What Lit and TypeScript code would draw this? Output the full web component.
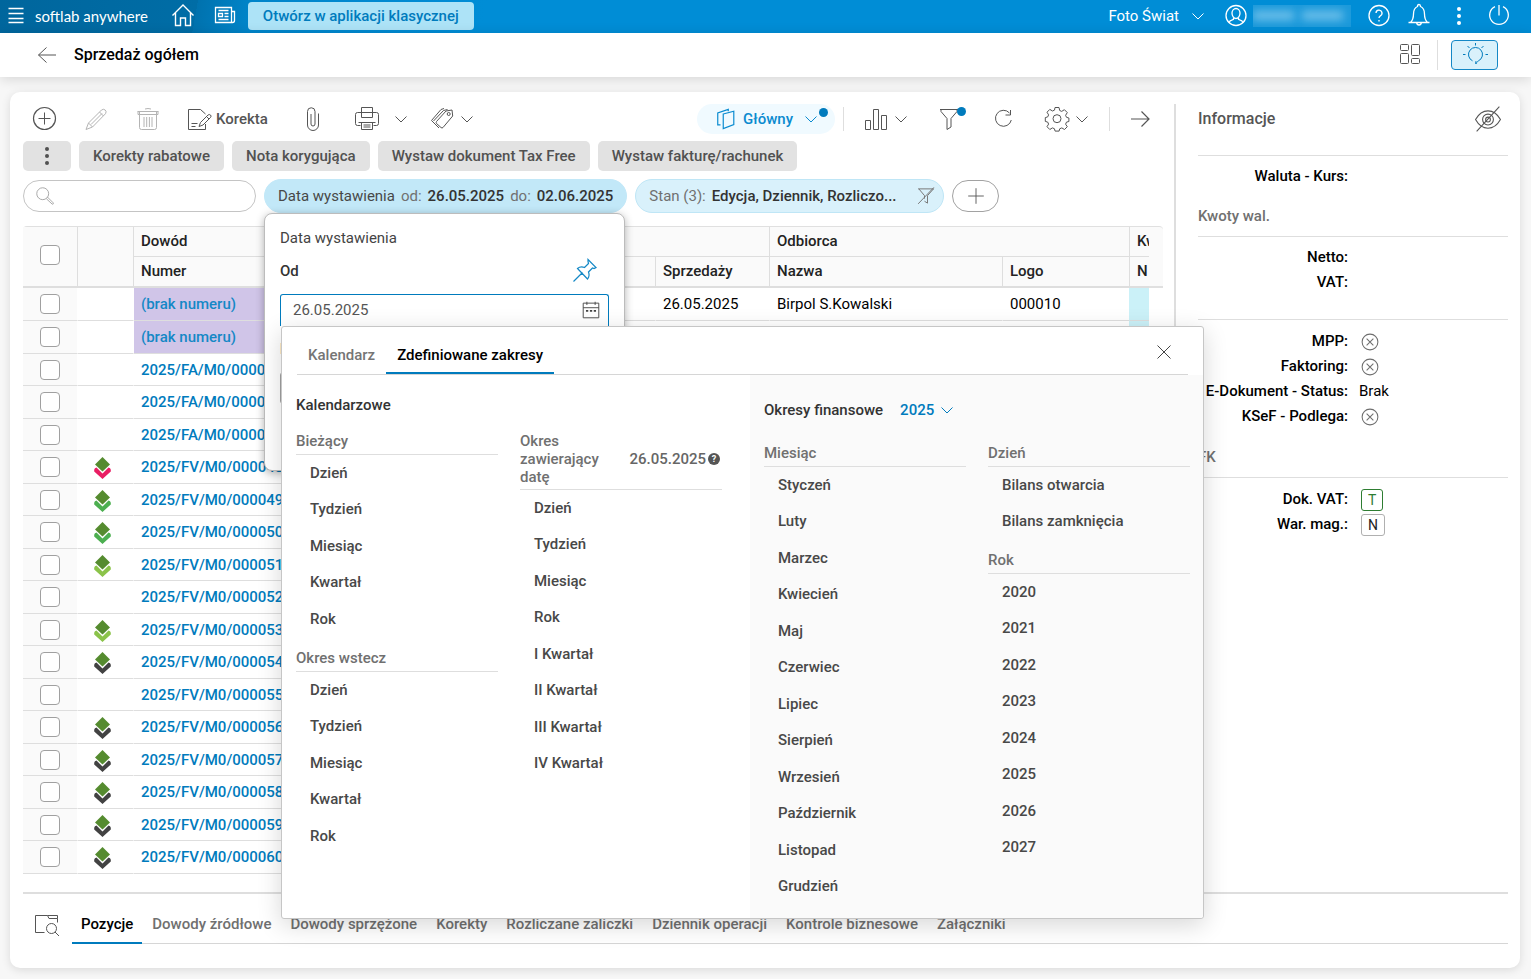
import { LitElement, html, svg, css, nothing } from "lit";
import { customElement, property, state } from "lit/decorators.js";
import { classMap } from "lit/directives/class-map.js";

const ICONS: Record<string, any> = {
  menu: svg`<path d="M4.500 4.500h15M4.500 9.500h15M4.500 14.500h15M4.500 18.500h15" stroke-width="1.500"/>`,
  home: svg`<path d="M1.500 11.500 12 1l10.500 10.500M4.500 9v12.500h5v-7.500h5v7.500h5V9" stroke-width="1.400"/>`,
  news: svg`<path d="M2.500 3.500h16v15h-16zM18.500 7.500h3v9q0 2-2 2h-2M5.500 6.500h10M5.500 9.500h4v3h-4zM11.500 9.500h4M11.500 12.500h4M5.500 15.500h10" stroke-width="1.300"/>`,
  chevron: svg`<path d="m6.500 9.500 5.500 5.500 5.500-5.500"/>`,
  user: svg`<circle cx="12" cy="11.500" r="10" stroke-width="1.300"/><path d="M9.500 14v1.300L6 17l-1 2M14.500 14v1.300l3.500 1.700 1 2M8 9a4 4.500 0 0 1 8 0c0 3-1.800 5.500-4 5.500s-4-2.500-4-5.500z" stroke-width="1.300"/>`,
  help: svg`<circle cx="12" cy="11.500" r="10" stroke-width="1.300"/><path d="M9 9a3 3 0 1 1 4.300 2.800c-1 .5-1.300 1-1.300 2.300M12 16v1.500" stroke-width="1.300"/>`,
  bell: svg`<path d="M1.500 18.500h21M3.500 18.500c2-2 3-4 3-8.500 0-4 1.500-6.500 4-7.500q0-2 1.500-2t1.500 2c2.500 1 4 3.500 4 7.500 0 4.500 1 6.500 3 8.500M9.500 18.500q.5 2.500 2.500 2.500t2.500-2.500" stroke-width="1.300"/>`,
  power: svg`<path d="M12 1v10.500M8 2.700a9.300 9.300 0 1 0 8 0" stroke-width="1.300"/>`,
  back: svg`<path d="M21 12H3.500M11.500 4.500 3.500 12l8 7.500"/>`,
  forward: svg`<path d="M3 12h18M13.500 4.500l7.500 7.500-7.500 7.500" stroke-width="1.200"/>`,
  layout: svg`<rect x="2.500" y="1.500" width="8" height="6" rx="1"/><rect x="13.500" y="1.500" width="8" height="11" rx="1"/><rect x="2.500" y="10.500" width="8" height="10" rx="1"/><rect x="13.500" y="15.500" width="8" height="5" rx="1"/>`,
  bulb: svg`<path d="M9.500 17.800a7 7 0 1 1 6 0c-1.500 1-2.200 2-2.500 3.200-.6-1.300-.6-2 .3-3M12.500 0v2.500M4.500 3l2 2M20.500 3l-2 2M0 11.500h2.500M22.500 11.500H25"/>`,
  plusCircle: svg`<circle cx="12.500" cy="11.500" r="11" stroke-width="1.200"/><path d="M12.500 5.500v12M6.500 11.500h12"/>`,
  pencil: svg`<path d="M2 22.500 4.500 16 17.500 3q2-1.500 3.700 0t.3 3.700L8.500 20zM4.500 16l4 4M15.500 5l4 4M7 17.500 18 6.500"/>`,
  trash: svg`<path d="M1.500 4.500h21M9 2q3-1 6 0M3.500 4.500v16q0 2 2 2h13q2 0 2-2v-16M2 4.500v3h20v-3M8 10v10M10.700 10v10M13.400 10v10M16 10v10"/>`,
  correction: svg`<path d="M17.500 17v5.500h-17v-20h12l5 4.500M3.500 16.500h6M3.500 19.500h4M11 19.500l1.500-4 7.500-7.500q1.300-1 2.500 0t0 2.500l-7.500 7.500zM18.500 9.500l2.500 2.500"/>`,
  clip: svg`<path d="M17.500 6.500V18a5.500 5.500 0 0 1-11 0V4.500a3.500 3.500 0 0 1 7.500 0V17a2 2 0 0 1-4 0V7"/>`,
  printer: svg`<path d="M6.500 5.500v-5h11v5M5.500 18.500h-3q-2 0-2-2v-9q0-2 2-2h19q2 0 2 2v9q0 2-2 2h-3M6.500 5.500v5h11v-5M6.500 15.500h11v7h-11zM3.500 15.500h17M8.500 18h7M8.500 20h7"/>`,
  tag: svg`<path d="m6.500 14.500 9.500-10.500 6-1 .7 6L13 20.500q-1 1-2 0l-4.500-4q-.7-.8 0-2zM3.500 14 13.500 3.500l4-1M1.500 13.500l9.500-11 3-1M1.500 13.500l7.500 7.500"/><circle cx="18.700" cy="7" r="1.500"/>`,
  book: svg`<path d="M9 6.500 20.500 3.500v14.500L9 22.500zM6 18.500H3V5.500L14.500 1.500v2" stroke-width="1.300"/>`,
  bars: svg`<path d="M1.500 13.500h5v9h-5zM9.500 2.500h5v20h-5zM17.500 8.500h5v14h-5z"/>`,
  funnel: svg`<path d="M3 2.500h18M4 2.500v2l6 7v11l4-2.500v-8.500l6-7v-2"/>`,
  refresh: svg`<path d="M18.500 6A8 8 0 1 0 20.300 13M19.500 3v5h-5"/>`,
  gear: svg`<path d="M10 .5h4l.7 3 2 .9 2.700-1.700 2.900 2.900-1.700 2.700.9 2 2.400.7v3.500l-2.400.6-.9 2.100 1.700 2.500-2.800 2.800-2.700-1.600-2.100.9-.6 2.300h-4l-.7-2.400-2-.8-2.600 1.600-2.800-2.800 1.600-2.600-.9-2-2.400-.7v-3.800l2.400-.7.9-2-1.600-2.700 2.800-2.800 2.700 1.600 2-.9z" stroke-linejoin="round"/><circle cx="12" cy="11.700" r="4"/>`,
  search: svg`<circle cx="9.500" cy="9.500" r="6.500"/><path d="m14.500 13 6.500 6.500q.500 1.500-1 1.500L13.500 15"/>`,
  clearFunnel: svg`<path d="M1.500 2.500h21M2.500 2.500 10 11.500v4M22 2.500 14 11.500v10l-4-2.500M22.500.500 1.500 22.500" stroke-width="1.300"/>`,
  plus: svg`<path d="M12 3.500v17M3.500 12h17"/>`,
  pin: svg`<path d="M.5 22.500 9.500 13.500M15 .5l8 8-2 1-1.500-.5-4 4q1.500 4-1 7L4.500 9.500q3-2.500 7-1l4-4-.5-2z" stroke-width="1.200"/>`,
  calendar: svg`<path d="M3.500 4.500h17v16h-17zM3.500 9.500h17M7.500 3v3.500M16.500 3v3.500"/><path d="M6.500 13h2.500M10.800 13h2.500M15 13h2.500" stroke-width="2"/>`,
  close: svg`<path d="m5.500 5.500 13 13M18.500 5.500l-13 13"/>`,
  eyeOff: svg`<path d="M.5 12.500Q5 4.500 12 4.500t11.500 8Q19 20.500 12 20.500T.5 12.500zM1.500 23.500 22.500.5"/><circle cx="12" cy="12.500" r="5"/><circle cx="12" cy="12.500" r="2.200"/>`,
  cross: svg`<circle cx="12" cy="12" r="10.500" stroke-width="1.400"/><path d="m7.500 7.500 9 9M16.500 7.500l-9 9" stroke-width="1.400"/>`,
  preview: svg`<path d="M9.500 19.500h-9v-17h12l1.500 3h8.500v4M12.500 2.500h10v3"/><circle cx="16.500" cy="15.500" r="5"/><path d="m20 19 4 4"/>`,
};

@customElement("ui-icon")
class UiIcon extends LitElement {
  @property() name = "";
  static styles = css`
    :host { display: inline-block; flex: none; width: 24px; height: 24px; }
    svg { display: block; width: 100%; height: 100%; fill: none; stroke: currentColor; overflow: visible; }
  `;
  render() {
    return html`<svg viewBox="0 0 24 24" aria-hidden="true">${ICONS[this.name]}</svg>`;
  }
}

const base = css`
  * { box-sizing: border-box; }
  button { border: 0; background: none; padding: 0; margin: 0; color: inherit; font: inherit; display: flex; align-items: center; cursor: pointer; white-space: nowrap; }
  h1, h2, h3, h4, ul, dl, dd { margin: 0; padding: 0; }
  h1, h2, h3, h4 { font-weight: 500; }
  ul { list-style: none; }
  a { color: inherit; text-decoration: none; }
  .chev { width: 24px; height: 24px; margin: 0 -6px; }
`;

@customElement("range-picker")
class RangePicker extends LitElement {
  static styles = [base, css`
    :host { display: block; background: #fff; border: 1px solid #c6c6c6; border-radius: 3px; box-shadow: 0 6px 24px rgba(0, 0, 0, .16); color: #484848; font-weight: 500; }
    .head { display: flex; align-items: flex-end; justify-content: space-between; height: 48px; margin: 0 15px; border-bottom: 1px solid #d6d6d6; }
    .tabs { display: flex; height: 48px; }
    .tab { padding: 11px 11px 0; color: #757575; border-bottom: 2px solid transparent; }
    .tab.on { color: #000; border-color: #007bbd; }
    .close { width: 24px; height: 24px; margin: 0 12px 10px; color: #444; align-self: flex-end; }
    .panes { display: grid; grid-template-columns: 468px 1fr; }
    .pane { padding: 20px 14px 22px; }
    .pane.fin { background: #fafafa; border-radius: 0 0 3px 0; padding-top: 23px; padding-right: 12px; }
    .title { display: flex; align-items: center; gap: 17px; line-height: 20px; font-size: 15px; color: #333; }
    .cols { display: grid; grid-template-columns: 202px 202px; gap: 22px; margin-top: 17px; }
    .fin .cols { margin-top: 22px; }
    .sub { display: flex; align-items: center; justify-content: space-between; font-size: 15px; line-height: 18px; padding-bottom: 4px; border-bottom: 1px solid #dedede; color: #707070; }
    .sub.tall { padding-bottom: 3px; }
    .sub span { width: 90px; }
    .sub time { display: flex; align-items: center; gap: 2px; padding-right: 2px; color: #666; }
    .hint { width: 12px; height: 12px; border-radius: 50%; background: #555; color: #fff; font-size: 9px; line-height: 12px; text-align: center; font-weight: 700; font-style: normal; }
    .list { padding: 8px 0 0 14px; }
    .list li { line-height: 20px; margin-bottom: 16px; }
    .list li:nth-child(even) { margin-bottom: 17px; }
    .list li:last-child { margin-bottom: 0; }
    .group + .group { margin-top: 20px; }
    .year { display: flex; align-items: center; color: #007bbd; }
    select { appearance: none; border: 0; background: none; padding: 0; color: inherit; font: inherit; width: 41px; }
  `];
  private group(title: any, items: string[], tall = false) {
    return html`<div class="group">
      <h4 class=${classMap({ sub: true, tall })}>${title}</h4>
      <ul class="list">${items.map((i) => html`<li><button>${i}</button></li>`)}</ul>
    </div>`;
  }
  render() {
    const span = ["Dzień", "Tydzień", "Miesiąc", "Kwartał", "Rok"];
    return html`
      <div class="head">
        <div class="tabs" role="tablist">
          <button class="tab" role="tab" aria-selected="false">Kalendarz</button>
          <button class="tab on" role="tab" aria-selected="true">Zdefiniowane zakresy</button>
        </div>
        <button class="close" aria-label="Zamknij"><ui-icon name="close"></ui-icon></button>
      </div>
      <div class="panes">
        <section class="pane">
          <h3 class="title">Kalendarzowe</h3>
          <div class="cols">
            <div>${this.group("Bieżący", span)}${this.group("Okres wstecz", span)}</div>
            <div>${this.group(html`<span>Okres zawierający datę</span><time>26.05.2025<i class="hint">?</i></time>`,
              ["Dzień", "Tydzień", "Miesiąc", "Rok", "I Kwartał", "II Kwartał", "III Kwartał", "IV Kwartał"], true)}</div>
          </div>
        </section>
        <section class="pane fin">
          <div class="title"><label for="year">Okresy finansowe</label>
            <span class="year"><select id="year"><option>2025</option></select><ui-icon class="chev" name="chevron"></ui-icon></span>
          </div>
          <div class="cols">
            <div>${this.group("Miesiąc", ["Styczeń", "Luty", "Marzec", "Kwiecień", "Maj", "Czerwiec", "Lipiec", "Sierpień", "Wrzesień", "Październik", "Listopad", "Grudzień"])}</div>
            <div>${this.group("Dzień", ["Bilans otwarcia", "Bilans zamknięcia"])}${this.group("Rok", ["2020", "2021", "2022", "2023", "2024", "2025", "2026", "2027"])}</div>
          </div>
        </section>
      </div>`;
  }
}

@customElement("info-panel")
class InfoPanel extends LitElement {
  static styles = [base, css`
    :host { display: block; color: #000; }
    .head { display: flex; justify-content: space-between; align-items: center; height: 51px; padding: 0 7px 22px 0; font-size: 16px; color: #555; }
    .head h2 { font-size: 16px; }
    .head ui-icon { width: 26px; height: 26px; }
    .block { border-top: 1px solid #dedede; padding-top: 8px; }
    .block.low { padding: 9px 0 1px; }
    .row { display: grid; grid-template-columns: 150px 1fr; column-gap: 11px; height: 25px; line-height: 25px; align-items: center; }
    dt { text-align: right; font-weight: 500; white-space: nowrap; justify-self: end; }
    dd { display: flex; align-items: center; }
    dd ui-icon { width: 18px; height: 18px; margin-left: 2px; color: #6e6e6e; }
    h3 { font-size: 15px; line-height: 20px; padding: 17px 0 10px; color: #707070; }
    .gap { height: 24px; }
    .flag { height: 22px; line-height: 20px; min-width: 22px; margin-left: 2px; text-align: center; border: 1px solid #b0b0b0; border-radius: 3px; font-size: 14px; color: #222; padding: 0 6px; }
    .flag.yes { border-color: #2e7d32; color: #2e7d32; }
  `];
  render() {
    const row = (k: string, v: any = nothing) => html`<div class="row"><dt>${k}</dt><dd>${v}</dd></div>`;
    const no = html`<ui-icon name="cross"></ui-icon>`;
    return html`
      <div class="head"><h2>Informacje</h2><button aria-label="Ukryj panel"><ui-icon name="eyeOff"></ui-icon></button></div>
      <dl class="block">${row("Waluta - Kurs:")}</dl>
      <h3>Kwoty wal.</h3>
      <dl class="block">${row("Netto:")}${row("VAT:")}</dl>
      <div class="gap"></div>
      <dl class="block low">${row("MPP:", no)}${row("Faktoring:", no)}${row("E-Dokument - Status:", "Brak")}${row("KSeF - Podlega:", no)}</dl>
      <h3>FK</h3>
      <dl class="block low">${row("Dok. VAT:", html`<span class="flag yes">T</span>`)}${row("War. mag.:", html`<span class="flag">N</span>`)}</dl>`;
  }
}

type Doc = { no: string; mark?: string; draft?: boolean; date?: string; name?: string; logo?: string };
const MARKS: Record<string, string> = { "48": "pink", "49": "green", "50": "green", "51": "lime", "53": "lime", "54": "dark", "56": "dark", "57": "dark", "58": "dark", "59": "dark", "60": "dark" };
const DOCS: Doc[] = [
  { no: "(brak numeru)", draft: true, date: "26.05.2025", name: "Birpol S.Kowalski", logo: "000010" },
  { no: "(brak numeru)", draft: true },
  ...["07", "08", "09"].map((n) => ({ no: `2025/FA/M0/0000${n}` })),
  ...Array.from({ length: 13 }, (_, i) => String(48 + i)).map((n) => ({ no: `2025/FV/M0/0000${n}`, mark: MARKS[n] })),
];

@customElement("app-root")
class AppRoot extends LitElement {
  @state() private docs = DOCS;
  static styles = [base, css`
    :host { display: flex; flex-direction: column; min-height: 100vh; font: 400 15px/20px Roboto, "Liberation Sans", sans-serif; color: #555; background: #f7f7f7; box-sizing: border-box; }
    .top { display: flex; align-items: center; height: 33px; padding: 0 20px 2px 4px; color: #fff; background: linear-gradient(100deg, #00669d 0, #006da6 195px, #0072ae 195px, #0085ca 250px, #008dd6 480px); }
    .brand { font: 400 15px/20px Lato, Roboto, sans-serif; margin-left: 7px; }
    .top .classic { height: 28px; padding: 0 15px; margin-left: 11px; border-radius: 4px; background: #ade3f7; color: #007bbd; font-weight: 500; }
    .top .home { margin: 0 18px 0 23px; }
    .top a, .top button { display: flex; }
    .acct { display: flex; align-items: center; margin-left: auto; gap: 16px; }
    .firm { gap: 13px; margin-right: 4px; }
    .me { gap: 5px; }
    .name { width: 98px; height: 22px; background: #1c9adb; overflow: hidden; display: flex; align-items: center; }
    .name i { flex: 1; height: 9px; margin: 0 8px 0 0; background: #6fc0ea; filter: blur(4px); }
    .dots { display: flex; flex-direction: column; align-items: center; gap: 3px; width: 24px; }
    .dots i { width: 4px; height: 4px; border-radius: 50%; background: currentColor; }
    .sub { display: flex; align-items: center; height: 44px; padding: 0 33px 0 35px; background: #fff; box-shadow: 0 2px 12px rgba(0, 0, 0, .14); }
    .sub h1 { font-size: 16px; line-height: 20px; color: #000; margin-left: 15px; }
    .sub .right { display: flex; align-items: center; margin-left: auto; }
    .vr { width: 1px; height: 30px; background: #dedede; }
    .right .vr { margin: 0 13px 0 15px; }
    .tips { width: 47px; height: 30px; justify-content: center; border: 1px solid #1488c6; border-radius: 4px; background: #d9f1fb; color: #007bbd; }
    .card { flex: 1; display: flex; flex-direction: column; margin: 15px 11px 11px 10px; padding: 0 12px 24px 13px; border-radius: 10px; background: #fff; box-shadow: 0 2px 10px rgba(0, 0, 0, .12); }
    .main { flex: 1; display: grid; grid-template-columns: minmax(0, 1fr) 334px; padding-top: 12px; }
    .left { padding-right: 11px; display: flex; flex-direction: column; }
    info-panel { border-left: 2px solid #dedede; padding-left: 22px; }
    .bar { display: flex; align-items: center; height: 29px; padding: 0 11px 0 9px; }
    .bar .g { display: flex; align-items: center; }
    .g.a { gap: 28px; }
    .g.b { gap: 30px; margin-left: 33px; }
    .g.c { gap: 23px; }
    .g.d { gap: 30px; margin: 0 21px 0 20px; }
    .g.r { margin-left: auto; }
    .split { display: flex; align-items: center; gap: 7px; }
    .split.wide { gap: 16px; }
    .off { color: #b4b4b4; }
    .label { gap: 4px; font-weight: 500; }
    .view { position: relative; height: 30px; gap: 6px; padding: 0 18px 0 18px; margin-right: 8px; border-radius: 15px; background: #f0faff; color: #0a8bd0; font-weight: 500; }
    .view ui-icon:first-child { width: 22px; height: 22px; }
    .view .chev { margin-left: 0; }
    .dot { position: absolute; top: 4px; right: 7px; width: 9px; height: 9px; border-radius: 50%; background: #007bbd; }
    .has { position: relative; }
    .has .dot { top: 0; right: -5px; }
    .bar .vr { height: 24px; }
    .bar .vr.end { margin-right: 18px; }
    .chips { display: flex; gap: 8px; margin: 8px 0; }
    .chip { height: 30px; padding: 0 14px; border-radius: 5px; background: #e2e2e2; color: #515151; font-weight: 500; }
    .chip.more { width: 48px; justify-content: center; }
    .more .dots { width: 4px; }
    .filters { display: flex; gap: 8px; align-items: center; height: 34px; }
    .search { display: flex; align-items: center; width: 233px; height: 32px; padding: 0 10px; border: 1px solid #c4c4c4; border-radius: 16px; color: #a2a2a2; }
    .search ui-icon { width: 22px; height: 22px; }
    .search input { flex: 1; min-width: 0; border: 0; outline: 0; background: none; font: inherit; }
    .anchor { position: relative; }
    .pill { height: 34px; padding: 0 13px; gap: 6px; border: 1px solid #bfe6f6; border-radius: 17px; background: #d9f1fb; color: #707070; }
    .pill b { font-weight: 500; color: #333; }
    .pill.on { background: #c2e8f8; border-color: #c2e8f8; }
    .pill.on span { color: #484848; }
    .pill ui-icon { width: 18px; height: 18px; margin: 0 -5px 0 15px; color: #777; }
    .add { width: 47px; height: 32px; justify-content: center; border: 1px solid #a2a2a2; border-radius: 16px; }
    .add ui-icon { width: 22px; height: 22px; }
    .pop { position: absolute; z-index: 5; top: 34px; left: 0; width: 361px; height: 258px; padding: 14px 15px; border: 1px solid #bcbcbc; border-radius: 8px; background: #fff; box-shadow: 0 2px 8px rgba(0, 0, 0, .3); color: #444; }
    .pop h2 { font-size: 15px; font-weight: 400; line-height: 20px; }
    .pop .lab { display: flex; align-items: center; justify-content: space-between; padding: 10px 12px 10px 0; line-height: 26px; font-weight: 500; color: #333; }
    .pop .lab ui-icon { color: #1488c6; }
    .date { position: relative; }
    .box { display: flex; align-items: center; width: 329px; height: 32px; padding: 0 6px 0 12px; border: 1px solid #a2a2a2; border-radius: 3px; }
    .box.on { border-color: #007bbd; border-bottom: 0; border-radius: 3px 3px 0 0; padding-bottom: 2px; }
    .box input { flex: 1; min-width: 0; border: 0; outline: 0; padding: 0; font: inherit; color: #555; background: none; }
    .box ui-icon { width: 22px; height: 22px; }
    range-picker { position: absolute; z-index: 6; top: 32px; left: 1px; width: 923px; }
    .grid { margin-top: 13px; padding-right: 14px; border-radius: 4px 4px 0 0; background: linear-gradient(#fafafa 0 59px, #e0e0e0 59px 61px, #fff 61px); border-top: 1px solid #e0e0e0; padding-bottom: 17px; }
    table { width: 100%; table-layout: fixed; border-collapse: separate; border-spacing: 0; }
    th, td { padding: 0 0 0 7px; text-align: left; white-space: nowrap; overflow: hidden; border-bottom: 1px solid #dedede; }
    th { height: 30px; background: #fafafa; color: #222; font-weight: 500; border-left: 1px solid #dedede; }
    th:first-child { border-left: 0; }
    .h1 th { padding-bottom: 2px; }
    .h2 th { height: 31px; padding-bottom: 1px; border-bottom-width: 2px; border-left: 1px solid #dedede; }
    .h1 .two { border-bottom-width: 2px; }
    .sel, th.sel { padding: 0; text-align: center; background: #fafafa; }
    .h1 th.sel { padding-bottom: 3px; }
    td { height: 32px; color: #000; border-left: 1px solid transparent; background-clip: padding-box; }
    tbody tr:first-child td, tbody tr:nth-child(even) td { height: 33px; }
    td.sel { border-left: 0; }
    .cy { background: #cbf1f8; border-left-color: #cbf1f8; }
    .draft { background-color: #d0c5e8; }
    .draft a { color: #1488c6; }
    td a { color: #007bbd; font-weight: 500; }
    input[type="checkbox"] { appearance: none; display: block; width: 20px; height: 20px; margin: 0 auto; border: 1px solid #a0a0a0; border-radius: 4px; background: #fff; }
    .ico { padding: 0 0 0 16px; }
    .mark { display: block; width: 17px; height: 22px; margin-top: 2px; }
    .mark .gem { fill: #558b2f; }
    .pink { fill: #e91e63; } .green { fill: #4caf50; } .lime { fill: #8bc34a; } .dark { fill: #424242; }
    .foot { display: flex; align-items: center; padding-left: 12px; gap: 13px; height: 52px; border-top: 2px solid #dedede; box-sizing: border-box; }
    .foot > ui-icon { margin-top: 12px; }
    .ftabs { flex: 1; display: flex; gap: 1px; height: 38px; margin-top: 12px; border-bottom: 1px solid #d6d6d6; color: #707070; font-weight: 500; }
    .ftabs button { height: 38px; padding: 0 9px; border-bottom: 2px solid transparent; }
    .ftabs .on { color: #000; border-color: #007bbd; }
  `];
  private chev = html`<ui-icon class="chev" name="chevron"></ui-icon>`;
  private btn(icon: string, label: string, cls = "") {
    return html`<button class=${cls} aria-label=${label}><ui-icon name=${icon}></ui-icon></button>`;
  }
  private split(icon: string, label: string, wide = false) {
    return html`<span class=${classMap({ split: true, wide })}>${this.btn(icon, label)}<button aria-label="${label}: więcej">${this.chev}</button></span>`;
  }
  private mark(kind?: string) {
    return kind ? html`<svg class="mark" viewBox="0 0 17 22"><path class="gem" d="M8.500 0 16 7.500 8.500 14.500 1 7.500z"/><path class=${kind} d="M2.500 10.500 8.500 16.500l6-6q2 .3 2.300 2.200V14.500L8.500 22 .2 14.500v-1.800q.3-1.900 2.300-2.200z"/></svg>` : nothing;
  }
  render() {
    return html`
      <header class="top">
        <button aria-label="Menu"><ui-icon name="menu"></ui-icon></button>
        <span class="brand">softlab anywhere</span>
        <a class="home" href="#" aria-label="Start"><ui-icon name="home"></ui-icon></a>
        <a href="#" aria-label="Aktualności"><ui-icon name="news"></ui-icon></a>
        <button class="classic">Otwórz w aplikacji klasycznej</button>
        <div class="acct">
          <button class="firm">Foto Świat ${this.chev}</button>
          <button class="me" aria-label="Konto"><ui-icon name="user"></ui-icon><span class="name"><i></i><i></i></span></button>
          ${this.btn("help", "Pomoc")}${this.btn("bell", "Powiadomienia")}
          <button aria-label="Więcej"><span class="dots"><i></i><i></i><i></i></span></button>
          ${this.btn("power", "Wyloguj")}
        </div>
      </header>
      <div class="sub">
        ${this.btn("back", "Wstecz")}
        <h1>Sprzedaż ogółem</h1>
        <div class="right">${this.btn("layout", "Układ")}<span class="vr"></span>${this.btn("bulb", "Podpowiedzi", "tips")}</div>
      </div>
      <main class="card">
        <div class="main">
          <div class="left">
            <div class="bar">
              <div class="g a">${this.btn("plusCircle", "Dodaj")}${this.btn("pencil", "Edytuj", "off")}${this.btn("trash", "Usuń", "off")}
                <button class="label"><ui-icon name="correction"></ui-icon>Korekta</button></div>
              <div class="g b">${this.btn("clip", "Załącz")}<div class="g c">${this.split("printer", "Drukuj", true)}${this.split("tag", "Etykiety")}</div></div>
              <div class="g r">
                <button class="view"><ui-icon name="book"></ui-icon>Główny ${this.chev}<i class="dot"></i></button>
                <span class="vr"></span>
                <div class="g d">${this.split("bars", "Wykres")}<button class="has" aria-label="Filtr"><ui-icon name="funnel"></ui-icon><i class="dot"></i></button>${this.btn("refresh", "Odśwież")}${this.split("gear", "Ustawienia")}</div>
                <span class="vr end"></span>${this.btn("forward", "Dalej")}
              </div>
            </div>
            <div class="chips">
              <button class="chip more" aria-label="Więcej akcji"><span class="dots"><i></i><i></i><i></i></span></button>
              ${["Korekty rabatowe", "Nota korygująca", "Wystaw dokument Tax Free", "Wystaw fakturę/rachunek"].map((c) => html`<button class="chip">${c}</button>`)}
            </div>
            <div class="filters">
              <label class="search"><ui-icon name="search"></ui-icon><input type="text" aria-label="Szukaj" /></label>
              <div class="anchor">
                <button class="pill on"><span>Data wystawienia</span>od: <b>26.05.2025</b>do: <b>02.06.2025</b></button>
                <div class="pop">
                  <h2>Data wystawienia</h2>
                  <div class="lab"><label for="from">Od</label><ui-icon name="pin"></ui-icon></div>
                  <div class="date">
                    <div class="box on"><input id="from" type="text" .value=${"26.05.2025"} /><ui-icon name="calendar"></ui-icon></div>
                    <range-picker></range-picker>
                  </div>
                  <div class="lab"><label for="to">Do</label></div>
                  <div class="box"><input id="to" type="text" .value=${"02.06.2025"} /><ui-icon name="calendar"></ui-icon></div>
                </div>
              </div>
              <button class="pill">Stan (3): <b>Edycja, Dziennik, Rozliczo...</b><ui-icon name="clearFunnel"></ui-icon></button>
              <button class="add" aria-label="Dodaj filtr"><ui-icon name="plus"></ui-icon></button>
            </div>
            <div class="grid">
              <table>
                <colgroup><col style="width:54px"><col style="width:56px"><col><col style="width:114px"><col style="width:114px"><col style="width:233px"><col style="width:127px"><col style="width:20px"></colgroup>
                <thead>
                  <tr class="h1"><th class="sel two" rowspan="2"><input type="checkbox" aria-label="Zaznacz wszystko" /></th><th class="two" rowspan="2"></th><th>Dowód</th><th colspan="2"></th><th colspan="2">Odbiorca</th><th>Kw</th></tr>
                  <tr class="h2"><th>Numer</th><th></th><th>Sprzedaży</th><th>Nazwa</th><th>Logo</th><th>N</th></tr>
                </thead>
                <tbody>
                  ${this.docs.map((d) => html`<tr>
                    <td class="sel"><input type="checkbox" aria-label="Zaznacz ${d.no}" /></td>
                    <td class="ico">${this.mark(d.mark)}</td>
                    <td class=${classMap({ draft: !!d.draft })}><a href="#">${d.no}</a></td>
                    <td></td><td>${d.date}</td><td>${d.name}</td><td>${d.logo}</td><td class="cy"></td></tr>`)}
                </tbody>
              </table>
            </div>
          </div>
          <info-panel></info-panel>
        </div>
        <footer class="foot">
          <ui-icon name="preview"></ui-icon>
          <nav class="ftabs" role="tablist">
            ${["Pozycje", "Dowody źródłowe", "Dowody sprzężone", "Korekty", "Rozliczane zaliczki", "Dziennik operacji", "Kontrole biznesowe", "Załączniki"].map((t, i) => html`<button role="tab" class=${i ? "" : "on"}>${t}</button>`)}
          </nav>
        </footer>
      </main>`;
  }
}
